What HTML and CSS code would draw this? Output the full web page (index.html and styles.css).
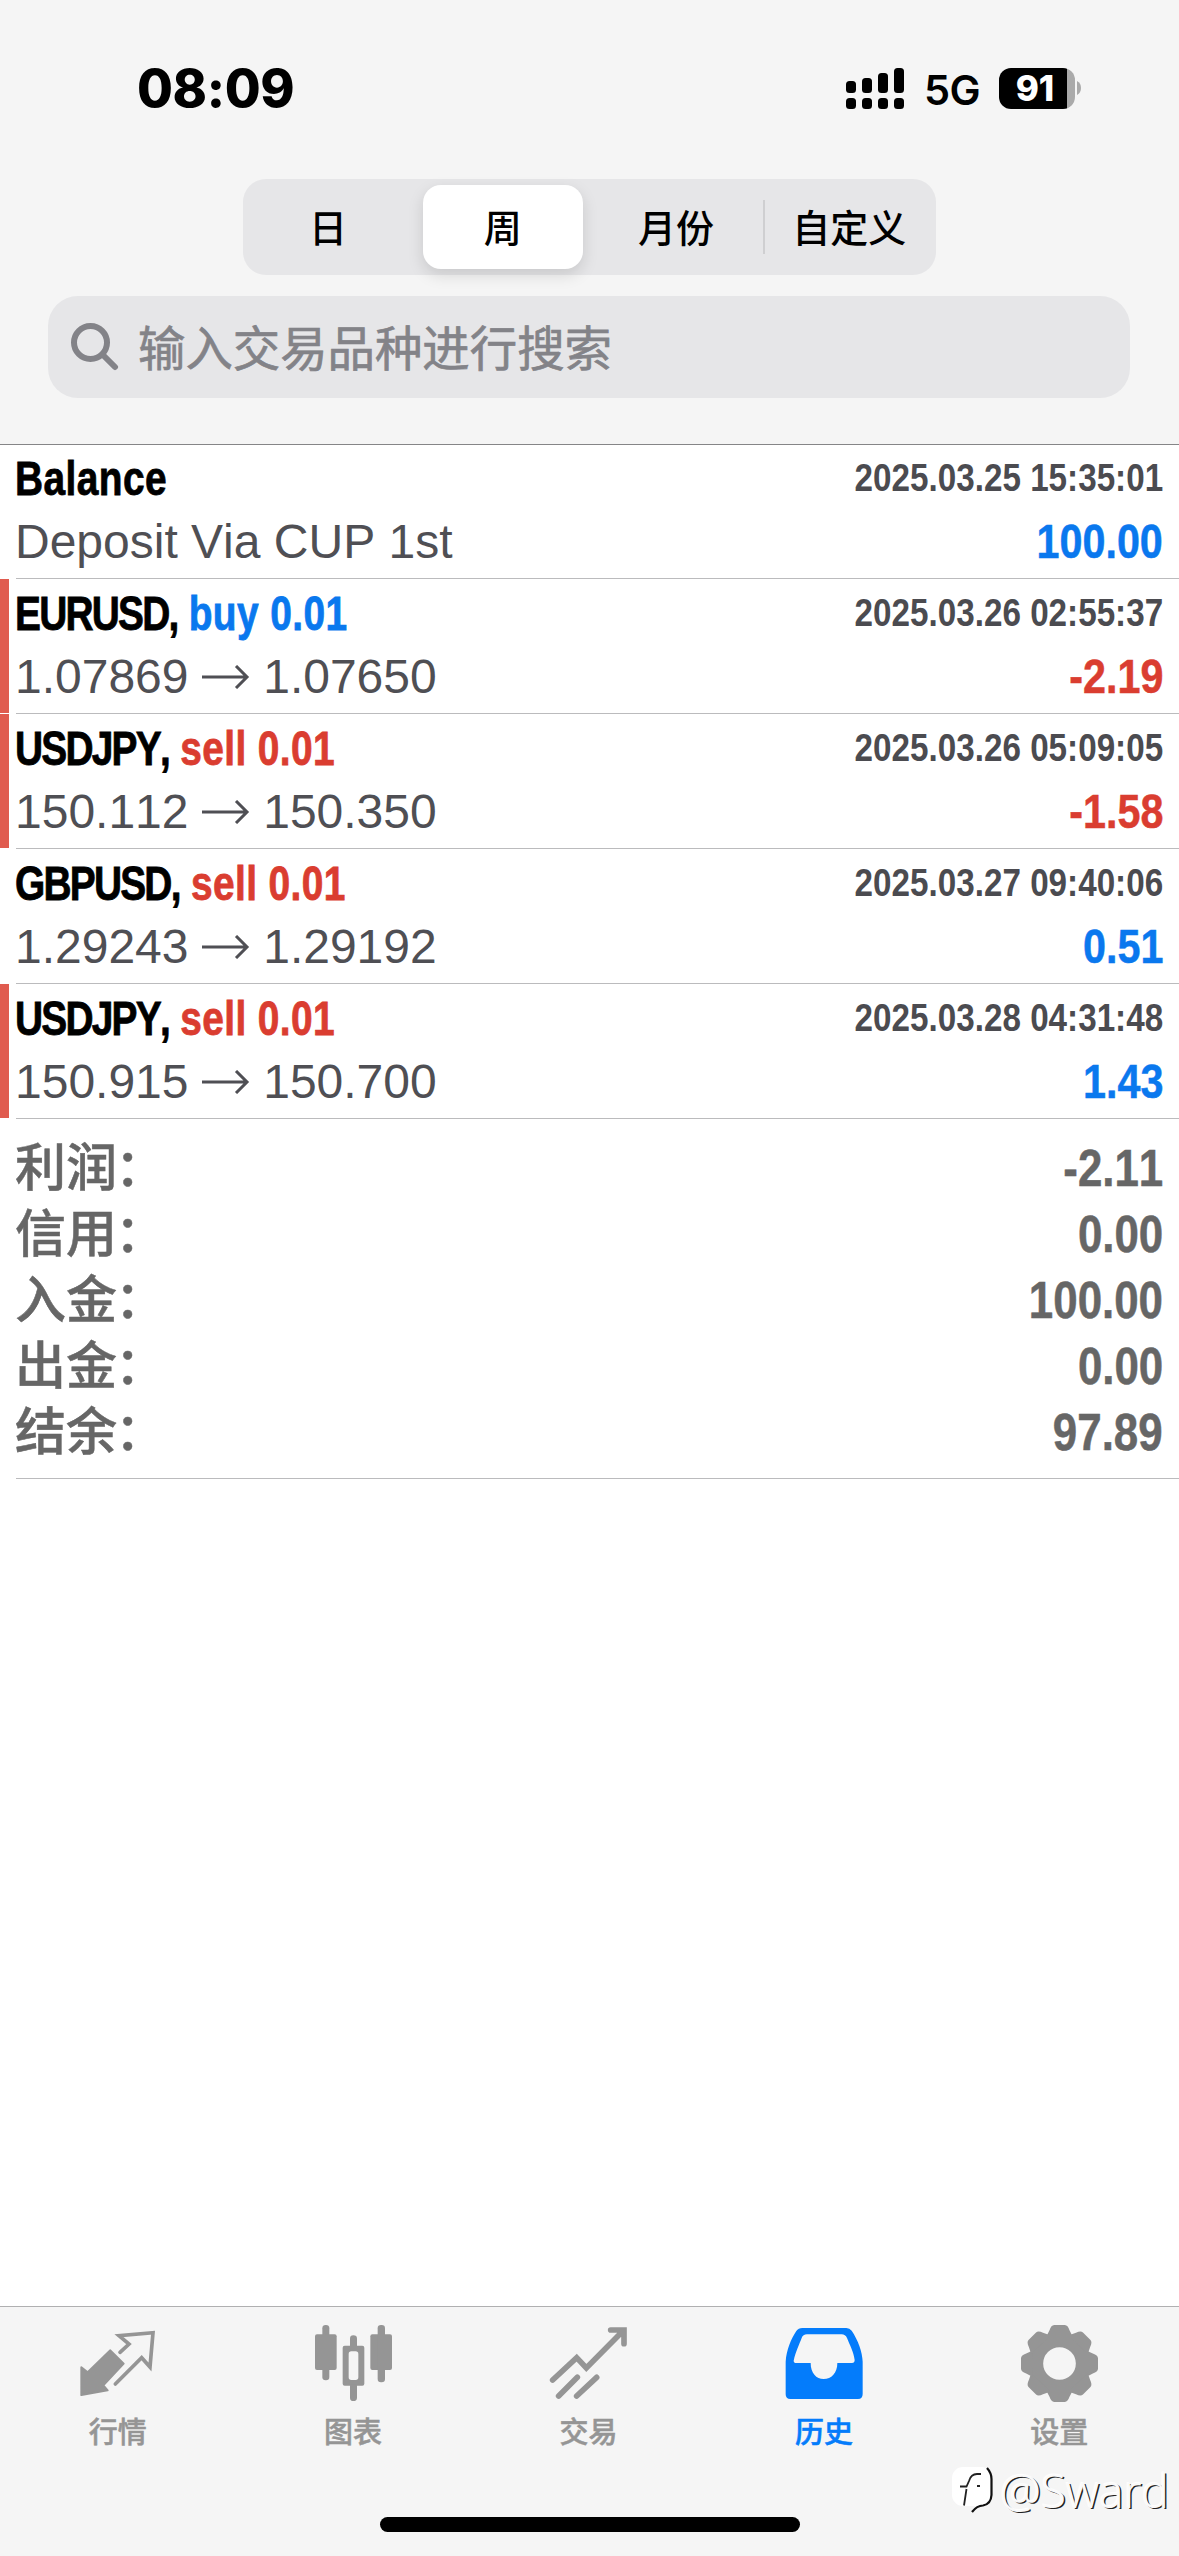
FILE: index.html
```html
<!DOCTYPE html>
<html lang="zh-CN">
<head>
<meta charset="utf-8">
<title>历史</title>
<link rel="stylesheet" href="styles.css">
</head>
<body>
<div class="screen">
  <header class="header">
    <div class="status">
      <span class="clock">08:09</span>
      <div class="status-right">
        <svg class="signal" viewBox="0 0 58 41" aria-hidden="true">
          <rect x="0" y="13" width="10" height="12" rx="3.5"/><rect x="16" y="10" width="10" height="15" rx="3.5"/><rect x="32" y="5" width="10" height="20" rx="3.5"/><rect x="48" y="0" width="10" height="25" rx="3.5"/>
          <rect x="0" y="30" width="10" height="11" rx="3.5"/><rect x="16" y="30" width="10" height="11" rx="3.5"/><rect x="32" y="30" width="10" height="11" rx="3.5"/><rect x="48" y="30" width="10" height="11" rx="3.5"/>
        </svg>
        <span class="network">5G</span>
        <div class="battery"><span class="level">91</span></div>
        <svg class="nub" viewBox="0 0 4 14" aria-hidden="true"><path d="M0 0Q4 2 4 7T0 14Z"/></svg>
      </div>
    </div>
    <nav class="segments">
      <span class="segment day">日</span>
      <span class="segment selected">周</span>
      <span class="segment">月份</span>
      <span class="segment divided">自定义</span>
    </nav>
    <div class="search">
      <svg class="search-icon" viewBox="0 0 48 48" aria-hidden="true"><circle cx="19.5" cy="19.5" r="16.5"/><path d="M31.5 31.5 44 44"/></svg>
      <span class="placeholder">输入交易品种进行搜索</span>
    </div>
  </header>

  <main class="history">
    <section class="row">
      <div class="line"><span class="title">Balance</span><span class="date">2025.03.25 15:35:01</span></div>
      <div class="line"><span class="detail">Deposit Via CUP 1st</span><span class="value blue">100.00</span></div>
    </section>
    <section class="row marked">
      <div class="line"><span class="title"><span class="symbol">EURUSD,</span> <span class="blue">buy 0.01</span></span><span class="date">2025.03.26 02:55:37</span></div>
      <div class="line"><span class="detail">1.07869 <svg class="arrow" viewBox="0 0 48 24"><path d="M0 12H45M34 1 45 12 34 23"/></svg> 1.07650</span><span class="value red">-2.19</span></div>
    </section>
    <section class="row marked">
      <div class="line"><span class="title"><span class="symbol">USDJPY,</span> <span class="red">sell 0.01</span></span><span class="date">2025.03.26 05:09:05</span></div>
      <div class="line"><span class="detail">150.112 <svg class="arrow" viewBox="0 0 48 24"><path d="M0 12H45M34 1 45 12 34 23"/></svg> 150.350</span><span class="value red">-1.58</span></div>
    </section>
    <section class="row">
      <div class="line"><span class="title"><span class="symbol">GBPUSD,</span> <span class="red">sell 0.01</span></span><span class="date">2025.03.27 09:40:06</span></div>
      <div class="line"><span class="detail">1.29243 <svg class="arrow" viewBox="0 0 48 24"><path d="M0 12H45M34 1 45 12 34 23"/></svg> 1.29192</span><span class="value blue">0.51</span></div>
    </section>
    <section class="row marked">
      <div class="line"><span class="title"><span class="symbol">USDJPY,</span> <span class="red">sell 0.01</span></span><span class="date">2025.03.28 04:31:48</span></div>
      <div class="line"><span class="detail">150.915 <svg class="arrow" viewBox="0 0 48 24"><path d="M0 12H45M34 1 45 12 34 23"/></svg> 150.700</span><span class="value blue">1.43</span></div>
    </section>
    <section class="summary">
      <div class="total"><span class="label">利润<span class="colon">：</span></span><span class="amount">-2.11</span></div>
      <div class="total"><span class="label">信用<span class="colon">：</span></span><span class="amount">0.00</span></div>
      <div class="total"><span class="label">入金<span class="colon">：</span></span><span class="amount">100.00</span></div>
      <div class="total"><span class="label">出金<span class="colon">：</span></span><span class="amount">0.00</span></div>
      <div class="total"><span class="label">结余<span class="colon">：</span></span><span class="amount">97.89</span></div>
    </section>
  </main>

  <footer class="footer">
    <nav class="tabs">
      <a class="tab">
        <svg class="tab-icon" viewBox="236 105 231 231"><path class="stroke" stroke-width="11" d="M359 187 386 162 356 137 458 128 449 231 424 203 345 282"/><path stroke="currentColor" stroke-width="6" stroke-linejoin="round" d="M330 181 370 221 309 286 322 301 243 315 243 232 262 247Z"/></svg>
        <span>行情</span>
      </a>
      <a class="tab">
        <svg class="tab-icon" viewBox="945 105 231 231"><rect x="945" y="133" width="65" height="107" rx="6"/><rect x="967" y="105" width="21" height="166" rx="10"/><rect x="1111" y="133" width="65" height="107" rx="6"/><rect x="1133" y="105" width="22" height="172" rx="10"/><path fill-rule="evenodd" d="M1034 167H1087Q1093 167 1093 173V281Q1093 287 1087 287H1034Q1028 287 1028 281V173Q1028 167 1034 167ZM1054 184Q1046 184 1046 192V262Q1046 270 1054 270H1067Q1075 270 1075 262V192Q1075 184 1067 184Z"/><path d="M1050 170V146Q1050 136 1060 136Q1071 136 1071 146V170ZM1050 284V323Q1050 333 1060 333Q1071 333 1071 323V284Z"/></svg>
        <span>图表</span>
      </a>
      <a class="tab">
        <svg class="tab-icon" viewBox="300 105 231 231"><path class="stroke" stroke-width="17" d="M308 270 380 203 409 234 521 121M482 120H522V161"/><path class="stroke" stroke-width="17" d="M326 318 382 262M380 318 440 262"/></svg>
        <span>交易</span>
      </a>
      <a class="tab active">
        <svg class="tab-icon" viewBox="1006 105 231 231"><path fill-rule="evenodd" d="M1008 215C1010 180 1025 145 1040 123Q1046 114 1058 114H1190Q1200 114 1206 122C1225 150 1238 185 1239 215V312Q1239 327 1225 327H1022Q1008 327 1008 313ZM1032 212C1038 185 1050 160 1056 144Q1060 133 1072 133H1176Q1187 133 1192 144C1200 165 1212 185 1215 210Q1215 219 1207 219H1163C1163 250 1145 267 1122 267C1100 267 1083 250 1083 219H1040Q1032 219 1032 212Z"/></svg>
        <span>历史</span>
      </a>
      <a class="tab">
        <svg class="tab-icon" viewBox="-115.500 -115.500 231 231">
          <defs><path id="tooth" d="M-40 -80Q-35 -90 -30 -100Q-25 -115 -16 -115.500H16Q25 -115 30 -100Q35 -90 40 -80Z"/></defs>
          <circle r="70.500" fill="none" stroke="currentColor" stroke-width="43"/>
          <use href="#tooth"/><use href="#tooth" transform="rotate(45)"/><use href="#tooth" transform="rotate(90)"/><use href="#tooth" transform="rotate(135)"/><use href="#tooth" transform="rotate(180)"/><use href="#tooth" transform="rotate(225)"/><use href="#tooth" transform="rotate(270)"/><use href="#tooth" transform="rotate(315)"/>
        </svg>
        <span>设置</span>
      </a>
    </nav>
    <div class="home-bar"></div>
  </footer>
  <div class="watermark">
    <svg class="mark" viewBox="0 0 44 48" aria-hidden="true"><rect x="0" y="1" width="40" height="39" rx="11" fill="#fff"/><path d="M12 39.500 14.500 23M8 20.500H14.500L17 15Q19 8 25 8H29M25 20H28" fill="none" stroke="#222" stroke-width="1.800"/><path d="M35 2Q39.500 7 39.500 13V29Q39 38 31 39.500 25 39.500 20 46" fill="none" stroke="#111" stroke-width="2.200"/></svg>
    <span>@Sward</span>
  </div>
</div>
</body>
</html>
```
FILE: styles.css
```css
* { box-sizing: border-box; }

body {
  margin: 0;
  background: #fff;
  color: #000;
  font-family: "Liberation Sans", "Noto Sans CJK SC", sans-serif;
}

.screen {
  position: relative;
  display: flex;
  flex-direction: column;
  width: 1179px;
  height: 2556px;
  overflow: hidden;
}

/* Header */
.header {
  height: 445px;
  background: #f5f5f5;
  border-bottom: 1px solid #858587;
}

.status {
  display: flex;
  justify-content: space-between;
  align-items: center;
  height: 179px;
  padding: 0 98px 3px 137px;
  font-family: Inter, sans-serif;
}

.clock {
  font-size: 52px;
  font-weight: 800;
  letter-spacing: -0.4px;
}

.status-right { display: flex; align-items: center; }
.signal { width: 58px; height: 41px; }

.network {
  width: 57px;
  margin: 3px 18px 0 20px;
  font-size: 41.5px;
  font-weight: 600;
  letter-spacing: -0.6px;
  white-space: nowrap;
}

.battery {
  width: 76px;
  height: 41px;
  border-radius: 12px;
  background: linear-gradient(90deg, #000 68px, #aaa 68px);
  color: #fff;
}

.level {
  display: block;
  width: 72px;
  font-size: 35px;
  font-weight: 800;
  line-height: 41px;
  text-align: center;
}

.nub { width: 4px; height: 14px; margin-left: 2px; fill: #aaa; }

.segments {
  display: grid;
  grid-template-columns: repeat(4, 1fr);
  width: 693px;
  height: 96px;
  margin-left: 243px;
  border-radius: 23px;
  background: #e6e6e8;
  font: 500 38px/94px "Noto Sans CJK SC", sans-serif;
  text-align: center;
}

.segment.day { padding-right: 3px; }

.segment.selected {
  margin: 6px 7px;
  border-radius: 18px;
  background: #fff;
  box-shadow: 0 6px 16px rgba(0, 0, 0, 0.13);
  line-height: 82px;
}

.segment.divided {
  background: linear-gradient(#cfcfd1, #cfcfd1) 0 50% / 2px 54px no-repeat;
}

.search {
  display: flex;
  align-items: center;
  width: 1082px;
  height: 102px;
  margin: 21px 0 0 48px;
  padding-left: 23px;
  border-radius: 30px;
  background: #e6e6e8;
  color: #838388;
}

.search-icon {
  width: 48px;
  height: 48px;
  fill: none;
  stroke: currentColor;
  stroke-width: 6;
  stroke-linecap: round;
}

.placeholder {
  margin: 0 0 2px 19px;
  font: 400 47.4px/1 "Noto Sans CJK SC", sans-serif;
  -webkit-text-stroke: 0.7px currentColor;
}

/* Deals */
.history { flex: 1; font-kerning: none; }

.row {
  position: relative;
  height: 135px;
  padding: 10px 16px 0;
  border-bottom: 1px solid transparent;
  background: linear-gradient(#bbbbbd, #bbbbbd) 16px 100% / 100% 1px no-repeat border-box;
}

.row:first-child { height: 134px; padding-top: 9px; }

.marked::before {
  content: "";
  position: absolute;
  top: 0;
  left: 0;
  width: 9px;
  height: 134px;
  background: #e05b4f;
}

.line {
  display: flex;
  justify-content: space-between;
  align-items: baseline;
  height: 63px;
  font-size: 48px;
  line-height: 50px;
  white-space: nowrap;
}

.title {
  font-weight: 700;
  letter-spacing: 0.5px;
  transform: translateX(-1px) scaleX(0.81);
  transform-origin: left;
  -webkit-text-stroke: 0.8px currentColor;
}

.symbol { letter-spacing: -2.2px; }
.detail { color: #4f4f54; transform: translateX(-1px); }

.date {
  color: #4b4b50;
  font-size: 39px;
  font-weight: 700;
  transform: translateY(-4px) scaleX(0.852);
  transform-origin: right;
}

.value, .amount {
  font-weight: 700;
  transform: scaleX(0.86);
  transform-origin: right;
  -webkit-text-stroke: 0.5px currentColor;
}

.blue { color: #0a78ee; }
.red { color: #da3d30; }

.arrow {
  width: 48px;
  height: 24px;
  vertical-align: 4px;
  fill: none;
  stroke: currentColor;
  stroke-width: 3;
}

.summary {
  height: 360px;
  padding: 17px 16px 0;
  background: linear-gradient(#bbbbbd, #bbbbbd) 16px 100% / 100% 1px no-repeat;
  color: #666;
  font-size: 51px;
}

.total {
  display: flex;
  justify-content: space-between;
  height: 66px;
  line-height: 66px;
}

.label {
  font-weight: 500;
  transform: translateX(-1px);
  -webkit-text-stroke: 0.5px currentColor;
}

.colon { margin-left: -2px; }

/* Tab bar */
.footer {
  height: 250px;
  border-top: 1px solid #b0b0b1;
  background: #f5f5f5;
}

.tabs { display: flex; width: 1177px; height: 210px; }

.tab {
  display: flex;
  flex: 1;
  flex-direction: column;
  align-items: center;
  padding-top: 18px;
  color: #959595;
  font: 500 29px/40px "Noto Sans CJK SC", sans-serif;
}

.tab span { margin-top: 8px; -webkit-text-stroke: 0.5px currentColor; }
.tab.active { color: #047cfb; }

.tab-icon { width: 77px; height: 77px; overflow: visible; fill: currentColor; }
.tab-icon .stroke {
  fill: none;
  stroke: currentColor;
  stroke-linecap: round;
  stroke-linejoin: miter;
}

.home-bar {
  width: 420px;
  height: 15px;
  margin: 0 auto;
  border-radius: 8px;
  background: #000;
}

.watermark {
  position: absolute;
  right: 10px;
  bottom: 36px;
  display: flex;
  align-items: center;
  gap: 4px;
  color: #fafafa;
  font: 300 46px/60px "Open Sans", "Noto Sans", sans-serif;
  text-shadow: -1px -1px 1px #fff, 1.5px 1px 0 #222;
}

.mark { width: 44px; height: 48px; }
```
